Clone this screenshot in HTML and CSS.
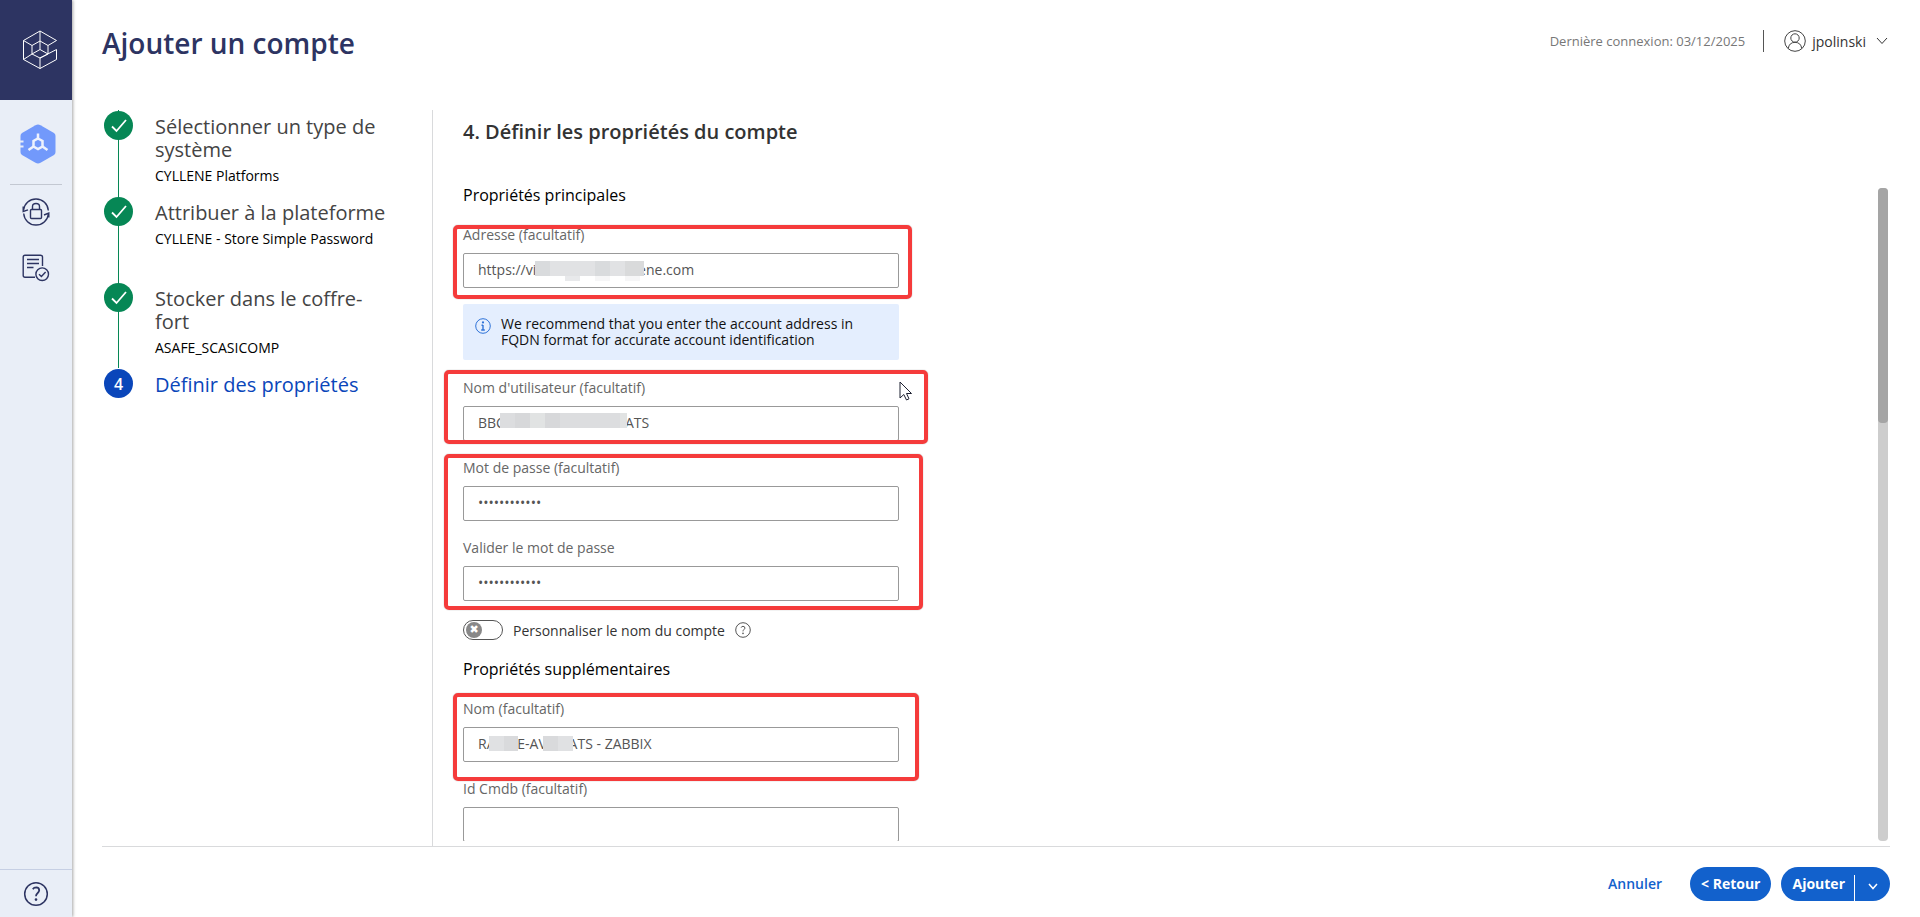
FILE: index.html
```html
<!DOCTYPE html>
<html lang="fr">
<head>
  <meta charset="UTF-8">
  <title>Ajouter un compte</title>
  <link rel="stylesheet" href="styles.css">
</head>
<body>
  <nav class="sidebar" aria-label="Navigation">
    <a href="#" class="logo" aria-label="Accueil">
      <svg width="36" height="40" viewBox="0 0 36 40" fill="none" stroke="#fff" stroke-width="1">
        <path d="M34.5 10.500 18 1 1.500 10.500V29.500L18 38.500 34.500 29.500V19.500L18 28V38.500"/>
        <path d="M18 1V11M1.500 10.500 10 15.500M34.500 10.500 26 15.500M10 15.500 18 11 26 15.500V24L18 28 10 24ZM10 24 1.500 29.500M10 24 18 19.500 26 24M18 11V19.500"/>
      </svg>
    </a>
    <a href="#" class="nav-item active" aria-label="Comptes">
      <svg width="36" height="40" viewBox="0 0 36 40" fill="none">
        <path d="M15.500 1.200Q18 0 20.500 1.200L34 9Q35.500 10 35.500 12V28Q35.500 30 34 31L20.500 38.800Q18 40 15.500 38.800L2 31Q.5 30 .5 28V12Q.5 10 2 9Z" fill="#7299fb"/>
        <path d="M0 17.500H3.500M0 22.500H3.500" stroke="#e9eef7" stroke-width="2"/>
        <path d="M18 14.500 22.500 17V22.500L18 25 13.500 22.500V17Z" stroke="#eef2fd" stroke-width="2.500"/>
        <path d="M18 9.500V14M13.500 22.500 8.500 26M22.500 22.500 27.500 26" stroke="#eef2fd" stroke-width="2.500"/>
      </svg>
    </a>
    <hr>
    <a href="#" class="nav-item" aria-label="Rotation des mots de passe">
      <svg width="28" height="28" viewBox="0 0 28 28" fill="none" stroke="#2d3462" stroke-width="1.400">
        <path d="M1.600 12A12.400 12.400 0 0 1 26.300 12.500M26.400 16A12.400 12.400 0 0 1 1.700 15.500M1.200 8.500V13.500L6 11.800M26.800 19.500V15L22 17"/>
        <rect x="8.500" y="11.500" width="11" height="9" rx="1"/>
        <path d="M10.500 11.500V8.500Q10.500 5.500 14 5.500T17.500 8.500V11.500"/>
      </svg>
    </a>
    <a href="#" class="nav-item" aria-label="Rapports">
      <svg width="28" height="28" viewBox="0 0 28 28" fill="none" stroke="#2d3462" stroke-width="1.400">
        <path d="M13 23.300H3Q1.200 23.300 1.200 21.500V3Q1.200 1.200 3 1.200H18.500Q20.500 1.200 20.500 3V12M5 5.500H17M5 9.500H17M5 13.500H11.500"/>
        <circle cx="20.200" cy="20.200" r="6.300"/>
        <path d="M17 20.200 19.400 22.500 23.600 18"/>
      </svg>
    </a>
    <a href="#" class="nav-help" aria-label="Aide">
      <svg width="26" height="26" viewBox="0 0 26 26" fill="none" stroke="#2d3462" stroke-width="1.500">
        <circle cx="13" cy="13" r="11.300"/>
        <path d="M9.800 8.200Q11 6.400 13.200 6.400 16.200 6.600 16.200 9.300 16.200 10.800 14.500 12.200 13 13.400 13 15.300" stroke-width="1.800"/>
        <circle cx="13" cy="18.600" r="1.300" fill="#2d3462" stroke="none"/>
      </svg>
    </a>
  </nav>

  <main class="page">
    <header class="page-header">
      <h1>Ajouter un compte</h1>
      <div class="user-bar">
        <span class="last-login">Dernière connexion: 03/12/2025</span>
        <button type="button" class="user-menu">
          <svg width="22" height="22" viewBox="0 0 22 22" fill="none" stroke="#444">
            <circle cx="11" cy="11" r="10.300"/>
            <circle cx="11" cy="8" r="4.200"/>
            <path d="M4.300 18.500Q5 12.500 11 12.300 17 12.500 17.700 18.500"/>
          </svg>
          <span>jpolinski</span>
          <svg class="chevron" width="12" height="8" viewBox="0 0 12 8" fill="none" stroke="#333"><path d="M1 1 6 6.500 11 1"/></svg>
        </button>
      </div>
    </header>

    <div class="wizard">
      <ol class="steps">
        <li class="step done">
          <span class="bullet"><svg width="16" height="14" viewBox="0 0 16 14" fill="none" stroke="#fff" stroke-width="1.800"><path d="M1 7.500 5.500 12 15 1"/></svg></span>
          <div class="step-text">
            <div class="step-title">Sélectionner un type de système</div>
            <div class="step-value">CYLLENE Platforms</div>
          </div>
        </li>
        <li class="step done">
          <span class="bullet"><svg width="16" height="14" viewBox="0 0 16 14" fill="none" stroke="#fff" stroke-width="1.800"><path d="M1 7.500 5.500 12 15 1"/></svg></span>
          <div class="step-text">
            <div class="step-title">Attribuer à la plateforme</div>
            <div class="step-value">CYLLENE - Store Simple Password</div>
          </div>
        </li>
        <li class="step done">
          <span class="bullet"><svg width="16" height="14" viewBox="0 0 16 14" fill="none" stroke="#fff" stroke-width="1.800"><path d="M1 7.500 5.500 12 15 1"/></svg></span>
          <div class="step-text">
            <div class="step-title">Stocker dans le coffre-fort</div>
            <div class="step-value">ASAFE_SCASICOMP</div>
          </div>
        </li>
        <li class="step current" aria-current="step">
          <span class="bullet">4</span>
          <div class="step-text">
            <div class="step-title">Définir des propriétés</div>
          </div>
        </li>
      </ol>

      <section class="panel">
        <h2>4. Définir les propriétés du compte</h2>
        <div class="scroll-row">
          <form class="properties" id="account-form">
            <h3>Propriétés principales</h3>

            <div class="group">
              <div class="field">
                <label for="address">Adresse (facultatif)</label>
                <input type="text" id="address" value="https://vi                            ene.com">
              </div>
              <svg class="mask mask-address" width="109" height="20" viewBox="0 0 109 20" shape-rendering="crispEdges">
                <path fill="#d9dbdd" d="M0 0h15v15H0zM60 0h15v15H60z"/>
                <path fill="#e1e2e4" d="M15 0h45v15H15zM75 0h15v15H75z"/>
                <path fill="#d9dadb" d="M90 0h19v15H90z"/>
                <path fill="#e8e9eb" d="M30 15h15v5H30z"/>
                <path fill="#f6f6f7" d="M60 15h15v5H60zM90 15h15v5H90z"/>
              </svg>
              <span class="highlight highlight-address"></span>
            </div>

            <p class="info">
              <svg width="16" height="16" viewBox="0 0 16 16" fill="none" stroke="#2f73d8">
                <circle cx="8" cy="8" r="7.300"/>
                <path d="M8 7V12M6.500 7.200H8M6.200 12H9.800" stroke-width="1.400"/>
                <circle cx="8" cy="4.400" r="1.100" fill="#2f73d8" stroke="none"/>
              </svg>
              <span>We recommend that you enter the account address in FQDN format for accurate account identification</span>
            </p>

            <div class="group">
              <div class="field">
                <label for="username">Nom d'utilisateur (facultatif)</label>
                <input type="text" id="username" value="BBC                                 ATS">
              </div>
              <svg class="mask mask-username" width="127" height="15" viewBox="0 0 127 15" shape-rendering="crispEdges">
                <path fill="#dcdddf" d="M0 0h127v15H0z"/>
                <path fill="#d7d8da" d="M15 0h15v15H15zM45 0h15v15H45z"/>
                <path fill="#e1e3e3" d="M30 0h15v15H30zM120 0h7v15h-7z"/>
              </svg>
              <span class="highlight highlight-username"></span>
              <svg class="cursor" width="14" height="21" viewBox="0 0 14 21"><path d="M1 1V17L4.800 13.500 7.500 19 10 17.800 7.500 12.500H12.500Z" fill="#fff" stroke="#1d2030"/></svg>
            </div>

            <div class="group">
              <div class="field">
                <label for="password">Mot de passe (facultatif)</label>
                <input type="password" id="password" value="motdepasse12">
              </div>
              <div class="field">
                <label for="password-check">Valider le mot de passe</label>
                <input type="password" id="password-check" value="motdepasse12">
              </div>
              <span class="highlight highlight-password"></span>
            </div>

            <div class="toggle-row">
              <input type="checkbox" id="custom-name" class="toggle">
              <label for="custom-name">Personnaliser le nom du compte</label>
              <svg width="16" height="16" viewBox="0 0 16 16" fill="none" stroke="#555">
                <circle cx="8" cy="8" r="7.300"/>
                <path d="M6.200 5.600Q6.500 4.300 8 4.300 9.900 4.400 9.900 6 9.900 6.900 8.900 7.600 8 8.300 8 9.400"/>
                <circle cx="8" cy="11.400" r=".8" fill="#555" stroke="none"/>
              </svg>
            </div>

            <h3>Propriétés supplémentaires</h3>

            <div class="group">
              <div class="field">
                <label for="name">Nom (facultatif)</label>
                <input type="text" id="name" value="RA      E-AV      ATS - ZABBIX">
              </div>
              <svg class="mask mask-name" width="84" height="15" viewBox="0 0 84 15" shape-rendering="crispEdges">
                <path fill="#e0e1e3" d="M0 0h15v15H0zM69 0h15v15H69z"/>
                <path fill="#d9dadc" d="M15 0h14v15H15zM54 0h15v15H54z"/>
              </svg>
              <span class="highlight highlight-name"></span>
            </div>
            <div class="group">
              <div class="field">
                <label for="cmdb">Id Cmdb (facultatif)</label>
                <input type="text" id="cmdb">
              </div>
            </div>
          </form>
          <div class="scrollbar"><div class="thumb"></div></div>
        </div>
      </section>
    </div>

    <footer class="actions">
      <button type="button" class="btn-link">Annuler</button>
      <button type="button" class="btn">&lt; Retour</button>
      <div class="split">
        <button type="submit" form="account-form" class="btn">Ajouter</button>
        <button type="button" class="btn btn-more" aria-label="Plus d'options">
          <svg width="10" height="7" viewBox="0 0 10 7" fill="none" stroke="#fff" stroke-width="1.500"><path d="M1 1 5 5.500 9 1"/></svg>
        </button>
      </div>
    </footer>
  </main>
</body>
</html>
```
FILE: styles.css
```css
:root {
  --navy: #2d3462;
  --side-bg: #e9eef7;
  --blue: #1261cc;
  --blue-dark: #0a46ba;
  --green: #068755;
  --red: #f53b3b;
  --line: #d9dadc;
  --text: #333;
  --muted: #666;
}

* {
  box-sizing: border-box;
}

body {
  margin: 0;
  height: 100vh;
  display: flex;
  background: #fff;
  font-family: "Open Sans", "Noto Sans", sans-serif;
  font-size: 14px;
  color: var(--text);
}

h1, h2, h3, p, ol {
  margin: 0;
  padding: 0;
}

button, input {
  font-family: inherit;
  font-size: 14px;
}

button {
  border: none;
  background: none;
  padding: 0;
  cursor: pointer;
}

/* sidebar */
.sidebar {
  width: 72px;
  flex: none;
  display: flex;
  flex-direction: column;
  align-items: center;
  background: var(--side-bg);
  box-shadow: 1px 0 3px rgba(0, 0, 0, 0.35);
}

.logo {
  width: 100%;
  height: 100px;
  padding-left: 8px;
  display: flex;
  align-items: center;
  justify-content: center;
  background: var(--navy);
}

.nav-item {
  height: 56px;
  display: flex;
  align-items: center;
}

.nav-item.active {
  height: 84px;
  padding: 4px 0 0 3px;
}

.sidebar hr {
  width: 52px;
  margin: 0 0 -1px;
  border: none;
  border-top: 1px solid #c3c8d2;
}

.nav-help {
  width: 100%;
  height: 48px;
  margin-top: auto;
  display: flex;
  align-items: center;
  justify-content: center;
  border-top: 1px solid #c6cfe4;
}

/* page */
.page {
  flex: 1;
  min-width: 0;
  display: flex;
  flex-direction: column;
  padding: 0 30px;
}

.page-header {
  height: 110px;
  flex: none;
  display: flex;
  justify-content: space-between;
  padding-top: 24px;
}

h1 {
  font-size: 28px;
  line-height: 38px;
  font-weight: 600;
  color: var(--navy);
}

.user-bar {
  display: flex;
  height: 34px;
  align-items: center;
}

.last-login {
  font-size: 13px;
  color: #777;
}

.user-menu {
  display: flex;
  align-items: center;
  height: 22px;
  margin-left: 18px;
  padding-left: 20px;
  padding-right: 2px;
  border-left: 1px solid #555;
  color: var(--text);
  gap: 6px;
}

.chevron {
  margin-left: 4px;
}

.wizard {
  flex: 1;
  min-height: 0;
  display: flex;
}

/* steps */
.steps {
  width: 331px;
  flex: none;
  list-style: none;
  border-right: 1px solid var(--line);
  padding-left: 2px;
}

.step {
  position: relative;
  display: flex;
  gap: 22px;
  min-height: 86px;
  padding-right: 44px;
}

.step.done::before {
  content: "";
  position: absolute;
  left: 14px;
  top: 0;
  bottom: 0;
  width: 1px;
  background: var(--green);
}

.bullet {
  position: relative;
  width: 29px;
  height: 29px;
  flex: none;
  margin-top: 1px;
  border-radius: 50%;
  display: flex;
  align-items: center;
  justify-content: center;
  background: var(--green);
  color: #fff;
  font-size: 16px;
  font-weight: 600;
}

.step-text {
  padding-top: 5px;
}

.step-title {
  font-size: 20px;
  line-height: 23px;
  color: #444;
}

.step-value {
  margin-top: 5px;
  line-height: 20px;
  color: #000;
}

.current .bullet {
  background: var(--blue-dark);
}

.current .step-title {
  color: var(--blue-dark);
}

/* form panel */
.panel {
  flex: 1;
  min-width: 0;
  display: flex;
  flex-direction: column;
}

h2 {
  height: 78px;
  flex: none;
  padding: 8px 0 0 30px;
  font-size: 20px;
  line-height: 28px;
  font-weight: 600;
}

.scroll-row {
  flex: 1;
  min-height: 0;
  display: flex;
  justify-content: space-between;
  padding: 0 2px 5px 0;
}

.properties {
  flex: 1;
  overflow: hidden;
  margin-top: -4px;
  padding-left: 30px;
}

h3 {
  font-size: 16px;
  line-height: 22px;
  height: 41px;
  font-weight: 400;
  color: #000;
}

.group {
  position: relative;
  width: 436px;
}

.field {
  height: 80px;
}

.field label {
  display: block;
  height: 28px;
  line-height: 20px;
  color: var(--muted);
}

.field input {
  width: 100%;
  height: 35px;
  padding: 0 14px 2px;
  border: 1px solid #999;
  border-radius: 2px;
  background: #fff;
  color: #555;
}

.info {
  width: 436px;
  height: 56px;
  margin: -1px 0 18px;
  display: flex;
  align-items: flex-start;
  gap: 10px;
  padding: 12px 40px 12px 12px;
  border-radius: 2px;
  background: #e4eefe;
  color: #111;
  line-height: 16px;
}

.info svg {
  flex: none;
  margin-top: 2px;
}

.toggle-row {
  display: flex;
  align-items: center;
  gap: 10px;
  height: 20px;
  margin: 2px 0 18px;
}

.toggle {
  appearance: none;
  width: 40px;
  height: 20px;
  margin: 0;
  border: 1px solid #555;
  border-radius: 10px;
  position: relative;
}

.toggle::before {
  content: "✖";
  position: absolute;
  left: 2px;
  top: 1px;
  width: 16px;
  height: 16px;
  border-radius: 50%;
  background: #888;
  color: #fff;
  font: 11px/16px "DejaVu Sans", sans-serif;
  text-align: center;
}

/* red frames and blurred values lie over the fields */
.highlight {
  position: absolute;
  border: 4px solid var(--red);
  border-radius: 5px;
  box-shadow: 0 0 1px rgba(0, 0, 0, 0.5);
  pointer-events: none;
}

.highlight-address {
  inset: 0 -13px 6px -10px;
}

.highlight-username {
  inset: -8px -29px 14px -19px;
}

.highlight-password {
  inset: -4px -24px 8px -19px;
}

.highlight-name {
  inset: -6px -20px -2px -10px;
}

.mask {
  position: absolute;
}

.mask-address {
  left: 72px;
  top: 36px;
}

.mask-username {
  left: 37px;
  top: 35px;
}

.mask-name {
  left: 26px;
  top: 37px;
}

.cursor {
  position: absolute;
  left: 436px;
  top: 3px;
}

.scrollbar {
  width: 10px;
  border-radius: 4px;
  background: #cdcdcd;
}

.thumb {
  height: 36%;
  border-radius: 4px;
  background: #a5a5a5;
}

/* footer */
.actions {
  flex: none;
  height: 71px;
  border-top: 1px solid var(--line);
  padding-top: 20px;
  display: flex;
  justify-content: flex-end;
  gap: 10px;
}

.btn, .btn-link {
  height: 34px;
  padding-bottom: 1px;
  font-weight: 600;
}

.btn-link {
  margin-right: 18px;
  color: var(--blue);
}

.btn {
  padding: 0 11px 1px;
  border-radius: 17px;
  background: var(--blue);
  color: #fff;
  font-weight: 700;
}

.split {
  display: flex;
  position: relative;
}

.split .btn:first-child {
  border-radius: 17px 0 0 17px;
}

.split .btn-more {
  padding: 0 12px;
  border-radius: 0 17px 17px 0;
}

.split .btn-more::before {
  content: "";
  position: absolute;
  top: 8px;
  bottom: 8px;
  margin-left: -14px;
  border-left: 1px solid #fff;
}
```
